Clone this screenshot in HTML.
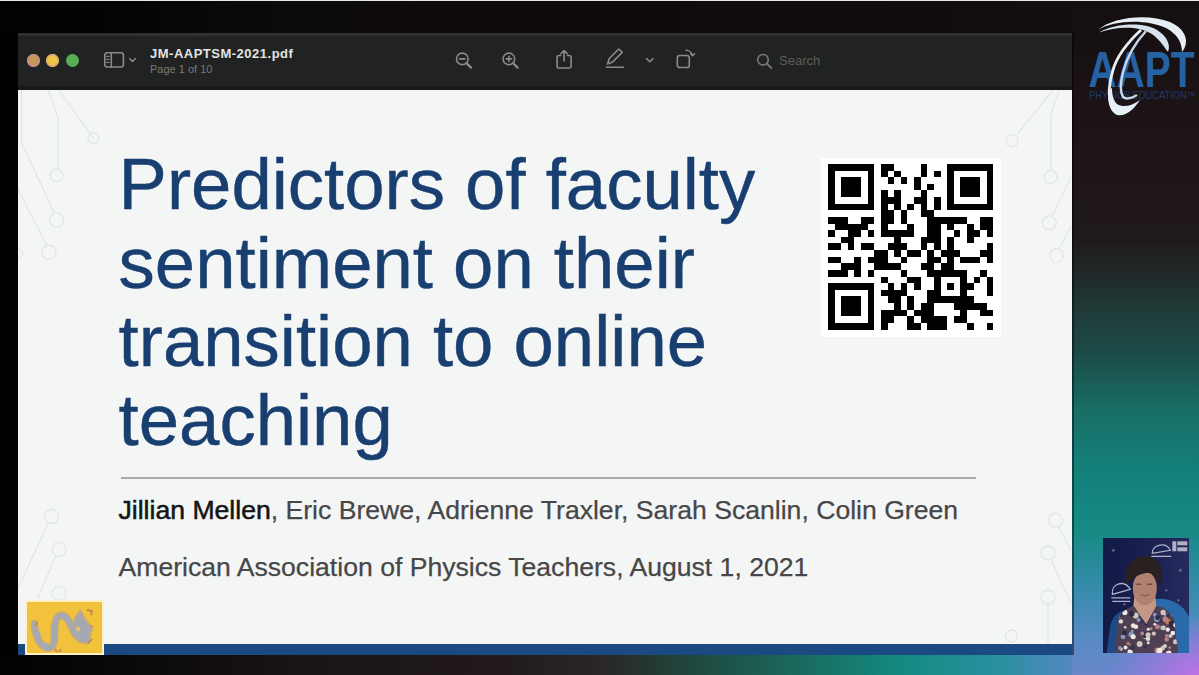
<!DOCTYPE html>
<html><head><meta charset="utf-8">
<style>
*{margin:0;padding:0;box-sizing:border-box}
html,body{width:1199px;height:675px;overflow:hidden}
body{position:relative;background:#020101;font-family:"Liberation Sans",sans-serif}
#topline{position:absolute;left:0;top:0;width:1199px;height:1px;background:#e8e8e8}
#bgT{position:absolute;left:0;top:1px;width:1199px;height:33px;background:linear-gradient(90deg,#020202 0px,#050404 120px,#0d0a0a 300px,#0f0b0b 650px,#110c0d 900px,#140e10 1199px)}
#bgR{position:absolute;left:1072px;top:1px;width:127px;height:674px;
 background:radial-gradient(ellipse 90px 60px at 127px 674px,rgba(196,112,232,0.95),rgba(160,118,224,0.6) 55%,rgba(120,130,210,0) 100%),linear-gradient(180deg,#130e10 0px,#1a1214 80px,#1e1618 180px,#211a1b 240px,#1f3634 300px,#1c4a46 350px,#186e66 410px,#14807a 470px,#178a84 530px,#3a8cb0 595px,#5a8ac4 640px,#6a86cc 675px)}
#bgB{position:absolute;left:0;top:655px;width:1072px;height:20px;
 background:linear-gradient(90deg,#020202 0px,#0c0a0a 150px,#1a1414 300px,#221a1a 500px,#2a2626 600px,#1f4a40 700px,#1a6a5e 800px,#138a80 900px,#2a90a0 1000px,#5288c0 1072px)}
#win{position:absolute;left:18px;top:33px;width:1054px;height:622px;overflow:hidden}
#tb{position:absolute;left:0;top:0;width:1054px;height:57px;background:#212322;border-top:3px solid #2f3030;border-bottom:4px solid #171818}
#slide{position:absolute;left:0;top:57px;width:1054px;height:554px;background:#f4f6f6;overflow:hidden}
#bar{position:absolute;left:0;top:611px;width:1054px;height:11px;background:#1b4a82}
.dot{position:absolute;top:17.5px;width:13px;height:13px;border-radius:50%}
.t{position:absolute;white-space:nowrap}
#title{left:100.6px;top:55.4px;color:#183f70;-webkit-text-stroke:0.45px #183f70;font-size:72.5px;line-height:78.4px}
</style></head><body>
<div id="topline"></div>
<div id="bgT"></div>
<div id="bgR"></div>
<div id="bgB"></div>
<div style="position:absolute;left:1072px;top:33px;width:2px;height:622px;background:rgba(0,0,0,0.45)"></div>
<div id="win">
 <div id="tb">
  <div class="dot" style="left:8.8px;background:#c99858;box-shadow:inset 0 0 0 1.5px #c48c8a"></div>
  <div class="dot" style="left:28.4px;background:#eec444;box-shadow:inset 0 0 0 1.5px #d8a880"></div>
  <div class="dot" style="left:47.9px;background:#58ae56"></div>
  <svg style="position:absolute;left:-18px;top:-36px" width="1199" height="100" fill="none" stroke="#8a8a8a" stroke-width="1.6" stroke-linecap="round" stroke-linejoin="round">
   <rect x="104.8" y="52.8" width="18.6" height="14.2" rx="2.5"/>
   <line x1="111.3" y1="52.8" x2="111.3" y2="67"/>
   <path d="M106.8 56.3h2.3M106.8 59.3h2.3M106.8 62.3h2.3" stroke-width="1.2"/>
   <path d="M129.6 58.6l2.9 2.9 2.9-2.9" stroke-width="1.4"/>
   <circle cx="462.3" cy="58.9" r="5.8"/><path d="M466.6 63.2l4.4 4.4" stroke-width="2.3"/><path d="M459.6 58.9h5.4"/>
   <circle cx="508.9" cy="58.9" r="5.8"/><path d="M513.2 63.2l4.4 4.4" stroke-width="2.3"/><path d="M506.2 58.9h5.4M508.9 56.2v5.4"/>
   <path d="M560.7 55.5h-1.8a1.8 1.8 0 0 0-1.8 1.8v8.9a1.8 1.8 0 0 0 1.8 1.8h10.4a1.8 1.8 0 0 0 1.8-1.8v-8.9a1.8 1.8 0 0 0-1.8-1.8h-1.8"/><path d="M564.1 61v-10.3M561 53.6l3.1-3.1 3.1 3.1"/>
   <path d="M607.5 64l1.8-5.5 9.5-9.5 3.4 3.4-9.5 9.5z"/><path d="M606.5 67.2h17"/>
   <path d="M646.6 58.6l3.2 3.2 3.2-3.2" stroke-width="1.5"/>
   <rect x="677.3" y="55.5" width="12" height="12" rx="2.6"/><path d="M686 50.3c3 0 6 2 6.6 5.2M690.6 53.8l2 2 2-2" stroke-width="1.4"/>
   <g stroke="#7a7a7a"><circle cx="763" cy="59.8" r="5.3"/><path d="M766.8 63.6l4.6 4.6" stroke-width="1.8"/></g>
  </svg>
  <div class="t" style="left:132px;top:10.3px;color:#e4e4e4;font-size:13px;font-weight:bold;letter-spacing:0.5px">JM-AAPTSM-2021.pdf</div>
  <div class="t" style="left:132px;top:27px;color:#7a7a7a;font-size:11px">Page 1 of 10</div>
  <div class="t" style="left:761px;top:17px;color:#5c5c5c;font-size:13px">Search</div>
 </div>
 <div id="slide">
  <svg style="position:absolute;left:0;top:-1px" width="1054" height="556" fill="none" stroke="#e2e5e7" stroke-width="1.3">
   <path d="M40 0L75.5 49.4"/><circle cx="75.5" cy="49.4" r="5.5"/>
   <path d="M29.6 0L40 28.6V80.4"/><circle cx="38.5" cy="86.4" r="6.3"/>
   <path d="M4 55L36 123"/><circle cx="38.5" cy="130.9" r="7"/>
   <path d="M0 100L29 157"/><circle cx="31" cy="163.4" r="7"/>
   <path d="M3.5 0V55"/><circle cx="-0.5" cy="164.8" r="5"/>
   <path d="M1035.7 0L999 45.5"/><circle cx="994.2" cy="51.7" r="6"/>
   <path d="M1041.6 0L1032.7 25.7V81.4"/><circle cx="1032.7" cy="87.9" r="6.5"/>
   <path d="M1053 88L1034 127"/><circle cx="1031.3" cy="133.8" r="7"/>
   <path d="M1053 138L1041 160"/><circle cx="1038.7" cy="166.4" r="7"/>
   <circle cx="33.5" cy="427.5" r="7"/><path d="M30.5 434L0 499"/>
   <circle cx="41" cy="460.3" r="7"/><path d="M38 466.5L19.7 509.4"/>
   <circle cx="41" cy="504.4" r="7"/>
   <circle cx="1037.6" cy="431.3" r="7"/><path d="M1040.6 437.5L1053 461.5"/>
   <circle cx="1030" cy="464" r="7"/><path d="M1033 470.5L1053 514.4"/>
   <circle cx="1030" cy="508" r="7"/><path d="M1030 515V555"/>
   <circle cx="993.5" cy="547" r="6"/>
  </svg>
  <div class="t" id="title">Predictors of faculty<br>sentiment on their<br>transition to online<br>teaching</div>
  <div style="position:absolute;left:103px;top:386.5px;width:855px;height:2px;background:#a9aaab"></div>
  <div class="t" style="left:100.5px;top:404.5px;font-size:26.6px;color:#474747;-webkit-text-stroke:0.25px #474747"><span style="color:#151515;-webkit-text-stroke:0.55px #151515">Jillian Mellen</span>, Eric Brewe, Adrienne Traxler, Sarah Scanlin, Colin Green</div>
  <div class="t" style="left:100.5px;top:462px;font-size:26.6px;color:#474747;-webkit-text-stroke:0.25px #474747">American Association of Physics Teachers, August 1, 2021</div>
  <div style="position:absolute;left:802.7px;top:68.4px;width:180.7px;height:178.6px;background:#fff"></div>
  <svg style="position:absolute;left:809.7px;top:74px" width="165.5" height="165.5" viewBox="0 0 25 25" shape-rendering="crispEdges"><path d="M0 0h7v1h-7zM8 0h2v1h-2zM14 0h1v1h-1zM18 0h7v1h-7zM0 1h1v1h-1zM6 1h1v1h-1zM8 1h1v1h-1zM10 1h1v1h-1zM14 1h1v1h-1zM16 1h1v1h-1zM18 1h1v1h-1zM24 1h1v1h-1zM0 2h1v1h-1zM2 2h3v1h-3zM6 2h1v1h-1zM9 2h1v1h-1zM11 2h1v1h-1zM13 2h1v1h-1zM18 2h1v1h-1zM20 2h3v1h-3zM24 2h1v1h-1zM0 3h1v1h-1zM2 3h3v1h-3zM6 3h1v1h-1zM13 3h1v1h-1zM15 3h1v1h-1zM18 3h1v1h-1zM20 3h3v1h-3zM24 3h1v1h-1zM0 4h1v1h-1zM2 4h3v1h-3zM6 4h1v1h-1zM8 4h1v1h-1zM10 4h1v1h-1zM14 4h1v1h-1zM18 4h1v1h-1zM20 4h3v1h-3zM24 4h1v1h-1zM0 5h1v1h-1zM6 5h1v1h-1zM8 5h3v1h-3zM13 5h2v1h-2zM16 5h1v1h-1zM18 5h1v1h-1zM24 5h1v1h-1zM0 6h7v1h-7zM8 6h1v1h-1zM10 6h1v1h-1zM12 6h1v1h-1zM14 6h1v1h-1zM16 6h1v1h-1zM18 6h7v1h-7zM8 7h2v1h-2zM11 7h1v1h-1zM14 7h2v1h-2zM0 8h3v1h-3zM5 8h2v1h-2zM8 8h2v1h-2zM11 8h1v1h-1zM15 8h6v1h-6zM23 8h2v1h-2zM1 9h5v1h-5zM8 9h1v1h-1zM12 9h1v1h-1zM15 9h2v1h-2zM18 9h1v1h-1zM21 9h1v1h-1zM23 9h2v1h-2zM0 10h1v1h-1zM3 10h2v1h-2zM6 10h1v1h-1zM8 10h5v1h-5zM15 10h2v1h-2zM19 10h1v1h-1zM21 10h2v1h-2zM24 10h1v1h-1zM2 11h2v1h-2zM10 11h1v1h-1zM14 11h3v1h-3zM18 11h1v1h-1zM21 11h1v1h-1zM0 12h2v1h-2zM3 12h1v1h-1zM5 12h2v1h-2zM9 12h3v1h-3zM14 12h1v1h-1zM16 12h1v1h-1zM18 12h1v1h-1zM24 12h1v1h-1zM7 13h2v1h-2zM10 13h1v1h-1zM12 13h2v1h-2zM15 13h1v1h-1zM17 13h3v1h-3zM23 13h2v1h-2zM0 14h2v1h-2zM4 14h1v1h-1zM6 14h3v1h-3zM11 14h1v1h-1zM15 14h2v1h-2zM18 14h1v1h-1zM20 14h3v1h-3zM24 14h1v1h-1zM2 15h3v1h-3zM7 15h4v1h-4zM14 15h2v1h-2zM17 15h2v1h-2zM0 16h3v1h-3zM4 16h1v1h-1zM6 16h1v1h-1zM11 16h1v1h-1zM15 16h6v1h-6zM23 16h1v1h-1zM8 17h1v1h-1zM12 17h2v1h-2zM16 17h1v1h-1zM20 17h1v1h-1zM22 17h1v1h-1zM24 17h1v1h-1zM0 18h7v1h-7zM9 18h1v1h-1zM11 18h1v1h-1zM13 18h1v1h-1zM16 18h1v1h-1zM18 18h1v1h-1zM20 18h2v1h-2zM24 18h1v1h-1zM0 19h1v1h-1zM6 19h1v1h-1zM8 19h4v1h-4zM15 19h2v1h-2zM20 19h1v1h-1zM24 19h1v1h-1zM0 20h1v1h-1zM2 20h3v1h-3zM6 20h1v1h-1zM9 20h2v1h-2zM12 20h1v1h-1zM15 20h7v1h-7zM0 21h1v1h-1zM2 21h3v1h-3zM6 21h1v1h-1zM10 21h1v1h-1zM12 21h1v1h-1zM14 21h2v1h-2zM19 21h5v1h-5zM0 22h1v1h-1zM2 22h3v1h-3zM6 22h1v1h-1zM8 22h4v1h-4zM13 22h3v1h-3zM20 22h1v1h-1zM23 22h2v1h-2zM0 23h1v1h-1zM6 23h1v1h-1zM8 23h2v1h-2zM12 23h1v1h-1zM14 23h4v1h-4zM19 23h2v1h-2zM0 24h7v1h-7zM8 24h1v1h-1zM12 24h2v1h-2zM15 24h3v1h-3zM21 24h1v1h-1zM24 24h1v1h-1z" fill="#000"/></svg>
 </div>
 <div id="bar"></div>
</div>

<svg id="aapt" style="position:absolute;left:0;top:0" width="1199" height="675">
 <g fill="#2562a4" font-family="Liberation Sans" font-weight="bold">
  <text x="1088.5" y="86.8" font-size="50.5" textLength="106" lengthAdjust="spacingAndGlyphs">AAPT</text>
 </g>
 <text x="1089" y="99" font-size="10.5" fill="#1f3a66" font-family="Liberation Sans" textLength="107" lengthAdjust="spacingAndGlyphs">PHYSICS EDUCATION&#8482;</text>
 <g>
  <path d="M1098 30 C1112 17 1148 13 1170 22 C1186 29 1190 42 1182 52 C1182 42 1177 34 1166 28 C1146 19 1114 20 1098 30 Z" fill="#e6edf4"/>
  <path d="M1099 32.5 C1116 23 1143 22 1157 30 C1167 36 1171 45 1168 52 C1163 45 1158 38 1151 33.5 C1139 26 1117 26 1099 32.5 Z" fill="#d6e2ee"/>
  <path d="M1141 30 C1128 42 1117 56 1113 70 C1109 84 1108 96 1111 104" fill="none" stroke="#e6ecf2" stroke-width="2.8"/>
  <path d="M1146 31 C1135 43 1127 57 1123 72 C1120 84 1120 92 1123 97 C1127 100 1132 98 1137 95" fill="none" stroke="#c4d6ea" stroke-width="2.5"/>
  <path d="M1108.5 90 C1107 102 1110 112 1117 115 C1126 117 1134 109 1140 100 C1132 106 1123 108 1117 104 C1113 100 1112 94 1112 88 Z" fill="#e6eef6"/>
 </g>
</svg>
<div id="ylogo" style="position:absolute;left:25px;top:600px;width:79px;height:55px;background:#fff2c4;padding:1.6px;">
 <div style="width:100%;height:100%;background:#f2c23c;position:relative">
  <svg style="position:absolute;left:-26.6px;top:-601.6px" width="120" height="660">
   <path d="M34.4 623.8 C35 636 40 646 47 648 C53 649 55 642 54.5 633 C54 624 56 616 61 615.5 C66 615 69 621 72 628 C75 635 80 641 87 640" fill="none" stroke="#d0ac6c" stroke-width="8" stroke-linecap="round"/>
   <path d="M72 622 L80 608.5 L85 617 L93.5 628 L90 641 L79 643 Z" fill="#d0ac6c"/>
   <path d="M34.4 623.8 C35 636 40 646 47 648 C53 649 55 642 54.5 633 C54 624 56 616 61 615.5 C66 615 69 621 72 628 C75 635 80 641 87 640" fill="none" stroke="#a6a9b0" stroke-width="5.5" stroke-linecap="round"/>
   <path d="M73.5 622 L80 610.5 L84 618.5 L91.5 628.5 L88.5 639 L80 641 Z" fill="#a6a9b0"/>
   <path d="M78 626l3 3-3 3-3-3z" fill="#e0c070"/>
   <path d="M87 610l5 1-1 4M88 643l4-4M90 627l3-1M61 649l-2 3M55 649l2 3M37 622l-1 4" stroke="#c8884a" stroke-width="1.8" fill="none"/>
   <path d="M46 645l2-2M82 636l3 1M39 632l1 4M57 630l-1 4" stroke="#8ab2d6" stroke-width="1.8" fill="none"/>
  </svg>
 </div>
</div>
<div id="cam" style="position:absolute;left:1102.7px;top:537.7px;width:86px;height:115px;overflow:hidden;background:linear-gradient(90deg,#121a46,#1a2050 55%,#262b5e)">
 <svg width="86" height="115" style="position:absolute;left:0;top:0">
  <g transform="translate(-1102.7 -537.7)">
   <g fill="#9aa0c0" opacity="0.5"><circle cx="1113" cy="550" r="1.5"/><circle cx="1180" cy="570" r="1.5"/><circle cx="1166" cy="590" r="1.2"/><circle cx="1124" cy="604" r="1.2"/><circle cx="1178" cy="600" r="1.2"/></g>
   <g fill="none" stroke="#b0b4cc" stroke-width="1.3">
    <path d="M1112 594 C1111 583 1124 579 1130 589 Z M1111 597.5h19M1112 601h18"/>
    <path d="M1152 553 C1152 544 1166 541 1170 550 Z M1151 556h20"/>
   </g>
   <g fill="#c8c8d4" opacity="0.85"><rect x="1172" y="541" width="4" height="10"/><rect x="1177" y="541" width="10" height="4"/><rect x="1177" y="547" width="10" height="4"/></g>
   <path d="M1152 599 C1172 596 1186 606 1190 620 L1190 655 L1158 655 Z" fill="#2a6aaa"/>
   <path d="M1106 655 L1110 625 C1113 614 1120 610 1128 610 L1128 655 Z" fill="#1e4a86"/>
   <path d="M1134 596 L1155 596 L1156 606 L1146 624 L1133 606 Z" fill="#c49884"/>
   <path d="M1114 655 L1118 618 C1122 610 1130 606 1134 606 L1146 626 L1156 606 C1162 606 1170 610 1174 620 L1178 655 Z" fill="#4e4052"/>
   <g clip-path="url(#topclip)"><circle cx="1131.0" cy="634.3" r="2.8" fill="#8a98b8"/><circle cx="1145.0" cy="635.8" r="2.8" fill="#d0c8c0"/><circle cx="1144.7" cy="634.6" r="3.0" fill="#2a2a4a"/><circle cx="1144.7" cy="646.3" r="1.9" fill="#3a3050"/><circle cx="1167.8" cy="621.5" r="2.8" fill="#c8784a"/><circle cx="1147.9" cy="642.4" r="1.5" fill="#e0d8d0"/><circle cx="1173.5" cy="613.8" r="2.7" fill="#d0c8c0"/><circle cx="1132.9" cy="636.4" r="2.5" fill="#f0e8e0"/><circle cx="1171.3" cy="628.2" r="2.9" fill="#3a3050"/><circle cx="1124.9" cy="627.0" r="1.4" fill="#d0c8c0"/><circle cx="1129.8" cy="651.6" r="2.6" fill="#f0e8e0"/><circle cx="1167.5" cy="629.3" r="2.2" fill="#f0e8e0"/><circle cx="1148.5" cy="628.7" r="2.8" fill="#2a2a4a"/><circle cx="1157.2" cy="650.1" r="3.0" fill="#b88080"/><circle cx="1156.6" cy="618.7" r="2.9" fill="#8a98b8"/><circle cx="1170.4" cy="635.3" r="2.3" fill="#2a2a4a"/><circle cx="1175.3" cy="623.0" r="1.3" fill="#e0d8d0"/><circle cx="1167.4" cy="652.6" r="1.8" fill="#e0d8d0"/><circle cx="1120.9" cy="648.8" r="1.7" fill="#d0c8c0"/><circle cx="1162.4" cy="647.8" r="2.3" fill="#d0c8c0"/><circle cx="1161.9" cy="627.5" r="2.2" fill="#8a98b8"/><circle cx="1171.4" cy="623.4" r="3.0" fill="#2a2a4a"/><circle cx="1135.3" cy="615.2" r="2.9" fill="#d0c8c0"/><circle cx="1174.3" cy="624.0" r="1.5" fill="#b88080"/><circle cx="1119.5" cy="647.6" r="1.8" fill="#8a98b8"/><circle cx="1125.2" cy="647.3" r="2.0" fill="#f0e8e0"/><circle cx="1147.7" cy="638.4" r="2.3" fill="#e0d8d0"/><circle cx="1172.5" cy="632.8" r="2.3" fill="#f0e8e0"/><circle cx="1159.2" cy="650.4" r="3.0" fill="#f0e8e0"/><circle cx="1147.7" cy="634.5" r="2.6" fill="#d0c8c0"/><circle cx="1175.3" cy="624.9" r="2.3" fill="#f0e8e0"/><circle cx="1154.3" cy="614.5" r="2.0" fill="#8a98b8"/><circle cx="1157.1" cy="626.5" r="2.5" fill="#b88080"/><circle cx="1118.3" cy="614.5" r="2.9" fill="#d0c8c0"/><circle cx="1131.8" cy="630.7" r="1.5" fill="#8a98b8"/><circle cx="1127.9" cy="643.1" r="1.7" fill="#b88080"/><circle cx="1139.3" cy="643.7" r="2.9" fill="#d0c8c0"/><circle cx="1157.3" cy="617.4" r="2.4" fill="#2a2a4a"/><circle cx="1132.9" cy="625.4" r="2.4" fill="#f0e8e0"/><circle cx="1122.7" cy="636.6" r="2.4" fill="#8a98b8"/><circle cx="1130.2" cy="645.2" r="1.3" fill="#c8784a"/><circle cx="1160.8" cy="620.9" r="1.7" fill="#3a3050"/><circle cx="1163.4" cy="613.4" r="1.8" fill="#2a2a4a"/><circle cx="1166.3" cy="635.6" r="1.8" fill="#b88080"/><circle cx="1165.8" cy="615.5" r="2.3" fill="#8a98b8"/><circle cx="1141.9" cy="633.3" r="2.0" fill="#b88080"/><circle cx="1154.4" cy="623.9" r="1.3" fill="#f0e8e0"/><circle cx="1141.4" cy="620.2" r="2.9" fill="#3a3050"/><circle cx="1168.9" cy="652.5" r="2.2" fill="#f0e8e0"/><circle cx="1175.2" cy="641.4" r="2.5" fill="#d0c8c0"/><circle cx="1166.4" cy="639.2" r="2.2" fill="#b88080"/><circle cx="1169.5" cy="647.3" r="1.4" fill="#b88080"/><circle cx="1131.4" cy="613.4" r="2.8" fill="#2a2a4a"/><circle cx="1170.1" cy="635.7" r="2.1" fill="#d0c8c0"/><circle cx="1124.1" cy="632.6" r="2.4" fill="#2a2a4a"/><circle cx="1148.0" cy="629.0" r="1.8" fill="#e0d8d0"/><circle cx="1131.9" cy="647.3" r="2.7" fill="#3a3050"/><circle cx="1120.6" cy="621.1" r="2.2" fill="#e0d8d0"/><circle cx="1165.2" cy="619.0" r="2.9" fill="#b88080"/><circle cx="1164.6" cy="645.8" r="2.1" fill="#d0c8c0"/><circle cx="1150.7" cy="628.4" r="1.6" fill="#b88080"/><circle cx="1153.5" cy="633.3" r="2.1" fill="#d0c8c0"/><circle cx="1162.8" cy="612.1" r="2.6" fill="#d0c8c0"/><circle cx="1119.7" cy="614.0" r="3.0" fill="#3a3050"/><circle cx="1167.4" cy="615.5" r="1.8" fill="#3a3050"/><circle cx="1135.6" cy="626.4" r="2.3" fill="#f0e8e0"/><circle cx="1138.3" cy="619.8" r="2.0" fill="#8a98b8"/><circle cx="1124.5" cy="612.1" r="2.6" fill="#f0e8e0"/><circle cx="1150.4" cy="613.8" r="2.3" fill="#3a3050"/><circle cx="1163.2" cy="627.6" r="2.3" fill="#d0c8c0"/></g>
   <clipPath id="topclip"><path d="M1114 655 L1118 618 C1122 610 1130 606 1134 606 L1146 626 L1156 606 C1162 606 1170 610 1174 620 L1178 655 Z"/></clipPath>
   <path d="M1126 584 C1122 566 1134 555 1146 556 C1160 557 1164 570 1160 586 L1156 578 C1148 572 1138 572 1132 578 Z" fill="#2a2020"/>
   <ellipse cx="1144.5" cy="588" rx="12" ry="17" fill="#b08070"/>
   <path d="M1132 578 C1138 568 1152 566 1158 576 C1154 572 1140 570 1132 580 Z" fill="#2a2020"/>
   <path d="M1136 584h5M1147 584h5" stroke="#6a4a40" stroke-width="1.5"/>
   <path d="M1140 594 C1143 596 1146 596 1149 594" stroke="#905a50" stroke-width="1.2" fill="none"/>
  </g>
 </svg>
</div>
</body></html>
